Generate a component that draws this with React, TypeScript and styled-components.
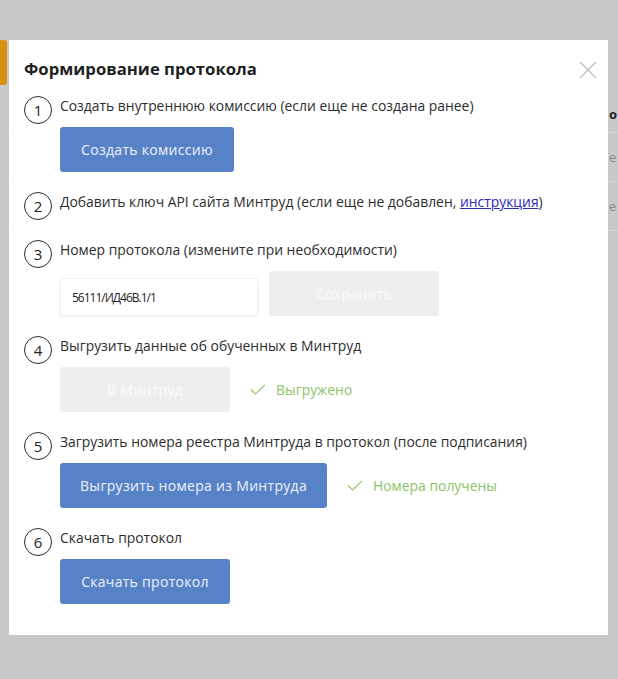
import * as React from 'react';
import styled, { createGlobalStyle } from 'styled-components';

const GlobalStyle = createGlobalStyle`
  html, body {
    margin: 0;
    padding: 0;
    background: #c8c8c8;
  }
  body {
    font-family: 'Open Sans', 'Liberation Sans', sans-serif;
    color: #2b2b2b;
  }
`;

// page behind the dim overlay
const Page = styled.div`
  position: relative;
  width: 618px;
  height: 679px;
  overflow: hidden;
  background: #c8c8c8;
  display: flex;
`;

const SideTab = styled.div`
  width: 7px;
  height: 45px;
  margin-top: 40px;
  background: #d8920f;
  border-radius: 0 3px 3px 0;
  flex-shrink: 0;
`;

const BackTable = styled.div`
  flex: 1;
  margin-top: 96px;
  display: flex;
  flex-direction: column;
`;

const BackRow = styled.div<{ $h: number; $head?: boolean }>`
  height: ${(p) => p.$h}px;
  display: flex;
  align-items: center;
  justify-content: flex-end;
  border-bottom: 1px solid #d3d3d3;
  font-size: 13px;
  font-weight: ${(p) => (p.$head ? 700 : 400)};
  color: ${(p) => (p.$head ? '#1e1e1e' : '#8a8a8a')};
`;

const BackCell = styled.span`
  width: 9px;
  white-space: nowrap;
`;

const Modal = styled.div`
  position: absolute;
  top: 40px;
  left: 9px;
  width: 599px;
  box-sizing: border-box;
  background: #fff;
  padding: 18px 15px 31px 15px;
`;

const Title = styled.h2`
  margin: 0 0 16px 0;
  font-size: 16.7px;
  line-height: 22px;
  font-weight: 700;
  color: #1f1f1f;
`;

const Close = styled.button`
  position: absolute;
  top: 21px;
  right: 11px;
  width: 18px;
  height: 18px;
  padding: 0;
  border: 0;
  background: none;
  cursor: pointer;
`;

const Step = styled.div`
  margin-bottom: 20px;
  &:last-child {
    margin-bottom: 0;
  }
`;

const StepHead = styled.div`
  display: flex;
  align-items: flex-start;
  min-height: 28px;
`;

const Num = styled.div`
  width: 28px;
  height: 28px;
  box-sizing: border-box;
  border: 1px solid #2a2a2a;
  border-radius: 50%;
  display: flex;
  align-items: center;
  justify-content: center;
  font-size: 15px;
  color: #222;
  flex-shrink: 0;
  margin-right: 8px;
`;

const StepText = styled.div`
  font-size: 13.9px;
  line-height: 19px;
  color: #2d2d2d;
`;

const Link = styled.a`
  color: #2b2bb5;
  text-decoration: underline;
`;

const StepBody = styled.div`
  display: flex;
  align-items: flex-end;
  gap: 11px;
  margin-top: 3px;
  padding-left: 36px;
`;

const Btn = styled.button<{ $w: number; $disabled?: boolean }>`
  width: ${(p) => p.$w}px;
  height: 45px;
  border: 0;
  border-radius: 3px;
  background: ${(p) => (p.$disabled ? '#eeeeee' : '#5882c8')};
  color: ${(p) => (p.$disabled ? '#fbfbfb' : '#eef2f9')};
  font-family: inherit;
  font-size: 14px;
  letter-spacing: 0.3px;
  cursor: ${(p) => (p.$disabled ? 'default' : 'pointer')};
`;

const Input = styled.input`
  width: 198px;
  height: 38px;
  box-sizing: border-box;
  border: 1px solid #f1f1f1;
  border-radius: 2px;
  box-shadow: 0 1px 3px rgba(0, 0, 0, 0.05);
  padding: 0 11px;
  font-family: inherit;
  font-size: 12px;
  letter-spacing: -1px;
  color: #1f1f1f;
  outline: none;
`;

const Done = styled.div`
  display: flex;
  align-items: center;
  gap: 10px;
  height: 45px;
  margin-left: 9px;
  font-size: 13.9px;
  color: #8cc36a;
`;

const Check = () => (
  <svg width="16" height="11" viewBox="0 0 16 11" fill="none">
    <path d="M1 5.5 L5.5 10 L15 1" stroke="#95c972" strokeWidth="1.2" />
  </svg>
);

export default function App() {
  return (
    <>
      <GlobalStyle />
      <Page>
        <SideTab />
        <BackTable>
          <BackRow $h={36} $head><BackCell>о</BackCell></BackRow>
          <BackRow $h={48}><BackCell>е</BackCell></BackRow>
          <BackRow $h={48}><BackCell>е</BackCell></BackRow>
        </BackTable>

        <Modal>
          <Title>Формирование протокола</Title>
          <Close aria-label="Закрыть">
            <svg width="18" height="18" viewBox="0 0 18 18">
              <path d="M1 1 L17 17 M17 1 L1 17" stroke="#bdbdbd" strokeWidth="1.2" />
            </svg>
          </Close>

          <Step>
            <StepHead>
              <Num>1</Num>
              <StepText>Создать внутреннюю комиссию (если еще не создана ранее)</StepText>
            </StepHead>
            <StepBody>
              <Btn $w={174}>Создать комиссию</Btn>
            </StepBody>
          </Step>

          <Step>
            <StepHead>
              <Num>2</Num>
              <StepText>
                Добавить ключ API сайта Минтруд (если еще не добавлен, <Link href="#">инструкция</Link>)
              </StepText>
            </StepHead>
          </Step>

          <Step>
            <StepHead>
              <Num>3</Num>
              <StepText>Номер протокола (измените при необходимости)</StepText>
            </StepHead>
            <StepBody>
              <Input defaultValue="56111/ИД46В.1/1" />
              <Btn $w={170} $disabled>Сохранить</Btn>
            </StepBody>
          </Step>

          <Step>
            <StepHead>
              <Num>4</Num>
              <StepText>Выгрузить данные об обученных в Минтруд</StepText>
            </StepHead>
            <StepBody>
              <Btn $w={170} $disabled>В Минтруд</Btn>
              <Done><Check />Выгружено</Done>
            </StepBody>
          </Step>

          <Step>
            <StepHead>
              <Num>5</Num>
              <StepText>Загрузить номера реестра Минтруда в протокол (после подписания)</StepText>
            </StepHead>
            <StepBody>
              <Btn $w={267}>Выгрузить номера из Минтруда</Btn>
              <Done><Check />Номера получены</Done>
            </StepBody>
          </Step>

          <Step>
            <StepHead>
              <Num>6</Num>
              <StepText>Скачать протокол</StepText>
            </StepHead>
            <StepBody>
              <Btn $w={170}>Скачать протокол</Btn>
            </StepBody>
          </Step>
        </Modal>
      </Page>
    </>
  );
}
